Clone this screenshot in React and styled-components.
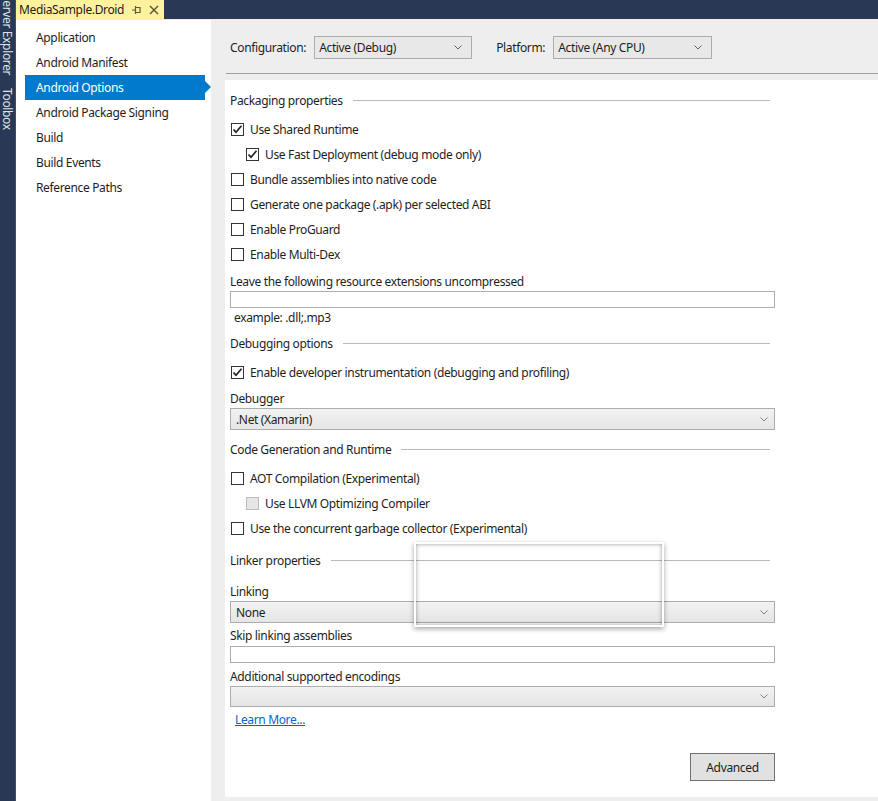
import React from 'react';
import styled, { createGlobalStyle } from 'styled-components';

const Global = createGlobalStyle`
  html, body {
    margin: 0;
    padding: 0;
    background: #eeeeee;
  }
  body {
    font-family: "Noto Sans", "Open Sans", sans-serif;
    font-size: 12px;
    letter-spacing: -0.35px;
    color: #1e1e1e;
  }
`;

const Root = styled.div`
  display: flex;
  width: 878px;
  height: 801px;
  overflow: hidden;
`;

const SideStrip = styled.div`
  width: 15px;
  background: #293955;
  border-right: 1px solid #3b4f71;
  color: #dfe3ea;
  font-size: 12px;
  writing-mode: vertical-rl;
  white-space: nowrap;
  line-height: 15px;
  display: flex;
  gap: 13px;
  overflow: hidden;
  span:first-child {
    margin-top: -6px;
  }
`;

const Main = styled.div`
  flex: 1;
  display: flex;
  flex-direction: column;
  min-width: 0;
`;

const TabBar = styled.div`
  height: 19px;
  background: #293955;
  border-bottom: 1px solid #fff29d;
  display: flex;
`;

const Tab = styled.div`
  background: #fff29d;
  display: flex;
  align-items: center;
  padding: 0 5px 0 3px;
  gap: 8px;
  color: #1e1e1e;
`;

const TabIcons = styled.div`
  display: flex;
  align-items: center;
  gap: 7px;
`;

const Body = styled.div`
  flex: 1;
  display: flex;
  min-height: 0;
`;

const Nav = styled.nav`
  width: 195px;
  background: #ffffff;
  padding-top: 5px;
`;

const NavItem = styled.div`
  position: relative;
  height: 25px;
  line-height: 25px;
  margin-left: 9px;
  width: 180px;
  padding-left: 11px;
  box-sizing: border-box;
  background: ${p => (p.$active ? '#007acc' : 'transparent')};
  color: ${p => (p.$active ? '#ffffff' : '#1e1e1e')};
  &::after {
    content: '';
    display: ${p => (p.$active ? 'block' : 'none')};
    position: absolute;
    right: -6px;
    top: 6px;
    border-left: 6px solid #007acc;
    border-top: 6px solid transparent;
    border-bottom: 6px solid transparent;
  }
`;

const Panel = styled.div`
  flex: 1;
  background: #eeeeee;
  padding-left: 14px;
  display: flex;
  flex-direction: column;
  padding-bottom: 4px;
`;

const ConfigBar = styled.div`
  height: 51px;
  padding-top: 2px;
  display: flex;
  align-items: center;
  padding-left: 4px;
  border-bottom: 1px solid #a0a0a0;
  margin-left: 1px;
`;

const ConfigLabel = styled.span`
  margin-right: ${p => p.$gap}px;
`;

const ConfigSelect = styled.div`
  width: ${p => p.$w}px;
  height: 23px;
  box-sizing: border-box;
  border: 1px solid #acacac;
  background: #e8e8e8;
  display: flex;
  align-items: center;
  justify-content: space-between;
  padding: 0 9px 0 4px;
  margin-right: ${p => p.$mr || 0}px;
`;

const Content = styled.div`
  position: relative;
  flex: 1;
  margin-top: 6px;
  background: #ffffff;
  padding: 8px 103px 0 5px;
  display: flex;
  flex-direction: column;
`;

const Header = styled.div`
  height: 24px;
  display: flex;
  align-items: center;
  gap: 10px;
  margin-top: ${p => p.$mt || 0}px;
  margin-bottom: 5px;
  margin-right: 5px;
  &::after {
    content: '';
    flex: 1;
    height: 1px;
    background: #b9b9b9;
  }
`;

const CheckRow = styled.label`
  height: 25px;
  display: flex;
  align-items: center;
  gap: 6px;
  padding-left: ${p => (p.$indent ? 16 : 1)}px;
`;

const Box = styled.span`
  width: 13px;
  height: 13px;
  box-sizing: border-box;
  border: 1px solid ${p => (p.$disabled ? '#bcbcbc' : '#333333')};
  background: ${p => (p.$disabled ? '#e6e6e6' : '#ffffff')};
  display: flex;
  align-items: center;
  justify-content: center;
`;

const Label = styled.div`
  height: 19px;
  padding-top: 1px;
  line-height: 20px;
  margin-top: ${p => p.$mt || 0}px;
`;

const Hint = styled.div`
  height: 17px;
  padding-top: 1px;
  line-height: 18px;
  padding-left: 4px;
`;

const TextBox = styled.div`
  height: 17px;
  box-sizing: border-box;
  border: 1px solid #abadb3;
  background: #ffffff;
  margin-top: ${p => p.$mt || 0}px;
`;

const Select = styled.div`
  height: ${p => p.$h || 22}px;
  box-sizing: border-box;
  border: 1px solid #acacac;
  background: linear-gradient(#f2f2f2, #e5e5e5);
  display: flex;
  align-items: center;
  justify-content: space-between;
  padding: 0 6px 0 5px;
`;

const LinkText = styled.a`
  height: 18px;
  line-height: 18px;
  margin-top: 4px;
  padding-left: 5px;
  color: #0066cc;
  text-decoration: underline;
  align-self: flex-start;
`;

const ButtonRow = styled.div`
  display: flex;
  justify-content: flex-end;
  margin-top: 24px;
`;

const Button = styled.button`
  width: 85px;
  height: 28px;
  border: 1px solid #707070;
  background: #e1e1e1;
  font: inherit;
  font-size: 12px;
  letter-spacing: -0.35px;
  color: #1e1e1e;
  padding: 0;
`;

const Popup = styled.div`
  position: absolute;
  left: 189px;
  top: 462px;
  width: 250px;
  height: 85px;
  box-sizing: border-box;
  border: 2px solid #ffffff;
  box-shadow: 0 2px 5px rgba(0, 0, 0, 0.35), inset 0 0 4px rgba(0, 0, 0, 0.4);
`;

const Chevron = ({ color = '#606060' }) => (
  <svg width="8" height="5" viewBox="0 0 8 5">
    <path d="M0.5 0.5 L4 4 L7.5 0.5" fill="none" stroke={color} strokeWidth="1" />
  </svg>
);

const Check = () => (
  <svg width="11" height="11" viewBox="0 0 11 11">
    <path d="M1.5 5.5 L4 8.2 L9.5 1.8" fill="none" stroke="#222" strokeWidth="1.7" />
  </svg>
);

function Checkbox({ checked, disabled, indent, children }) {
  return (
    <CheckRow $indent={indent}>
      <Box $disabled={disabled}>{checked && <Check />}</Box>
      {children}
    </CheckRow>
  );
}

const navItems = [
  'Application',
  'Android Manifest',
  'Android Options',
  'Android Package Signing',
  'Build',
  'Build Events',
  'Reference Paths',
];

export default function App() {
  return (
    <Root>
      <Global />
      <SideStrip>
        <span>Server Explorer</span>
        <span>Toolbox</span>
      </SideStrip>
      <Main>
        <TabBar>
          <Tab>
            MediaSample.Droid
            <TabIcons>
              <svg width="10" height="10" viewBox="0 0 10 10">
                <path d="M0 5 H3 M3.5 2.5 H8 V7.5 H3.5 Z M3.5 1 V9" fill="none" stroke="#5a5a3c" strokeWidth="1.2" />
              </svg>
              <svg width="10" height="10" viewBox="0 0 10 10">
                <path d="M1 1 L9 9 M9 1 L1 9" stroke="#5a5a3c" strokeWidth="1.5" />
              </svg>
            </TabIcons>
          </Tab>
        </TabBar>
        <Body>
          <Nav>
            {navItems.map(n => (
              <NavItem key={n} $active={n === 'Android Options'}>{n}</NavItem>
            ))}
          </Nav>
          <Panel>
            <ConfigBar>
              <ConfigLabel $gap={8}>Configuration:</ConfigLabel>
              <ConfigSelect $w={158} $mr={24}>
                Active (Debug) <Chevron />
              </ConfigSelect>
              <ConfigLabel $gap={8}>Platform:</ConfigLabel>
              <ConfigSelect $w={159}>
                Active (Any CPU) <Chevron />
              </ConfigSelect>
            </ConfigBar>
            <Content>
              <Header>Packaging properties</Header>
              <Checkbox checked>Use Shared Runtime</Checkbox>
              <Checkbox checked indent>Use Fast Deployment (debug mode only)</Checkbox>
              <Checkbox>Bundle assemblies into native code</Checkbox>
              <Checkbox>Generate one package (.apk) per selected ABI</Checkbox>
              <Checkbox>Enable ProGuard</Checkbox>
              <Checkbox>Enable Multi-Dex</Checkbox>
              <Label $mt={4}>Leave the following resource extensions uncompressed</Label>
              <TextBox />
              <Hint>example: .dll;.mp3</Hint>

              <Header $mt={5}>Debugging options</Header>
              <Checkbox checked>Enable developer instrumentation (debugging and profiling)</Checkbox>
              <Label $mt={3}>Debugger</Label>
              <Select>
                .Net (Xamarin) <Chevron color="#808080" />
              </Select>

              <Header $mt={7}>Code Generation and Runtime</Header>
              <Checkbox>AOT Compilation (Experimental)</Checkbox>
              <Checkbox disabled indent>Use LLVM Optimizing Compiler</Checkbox>
              <Checkbox>Use the concurrent garbage collector (Experimental)</Checkbox>

              <Header $mt={7}>Linker properties</Header>
              <Label $mt={4}>Linking</Label>
              <Select>
                None <Chevron color="#808080" />
              </Select>
              <Label $mt={2}>Skip linking assemblies</Label>
              <TextBox $mt={1} />
              <Label $mt={3}>Additional supported encodings</Label>
              <Select $h={21}>
                <span />
                <Chevron color="#808080" />
              </Select>
              <LinkText>Learn More...</LinkText>
              <ButtonRow>
                <Button>Advanced</Button>
              </ButtonRow>
              <Popup />
            </Content>
          </Panel>
        </Body>
      </Main>
    </Root>
  );
}
